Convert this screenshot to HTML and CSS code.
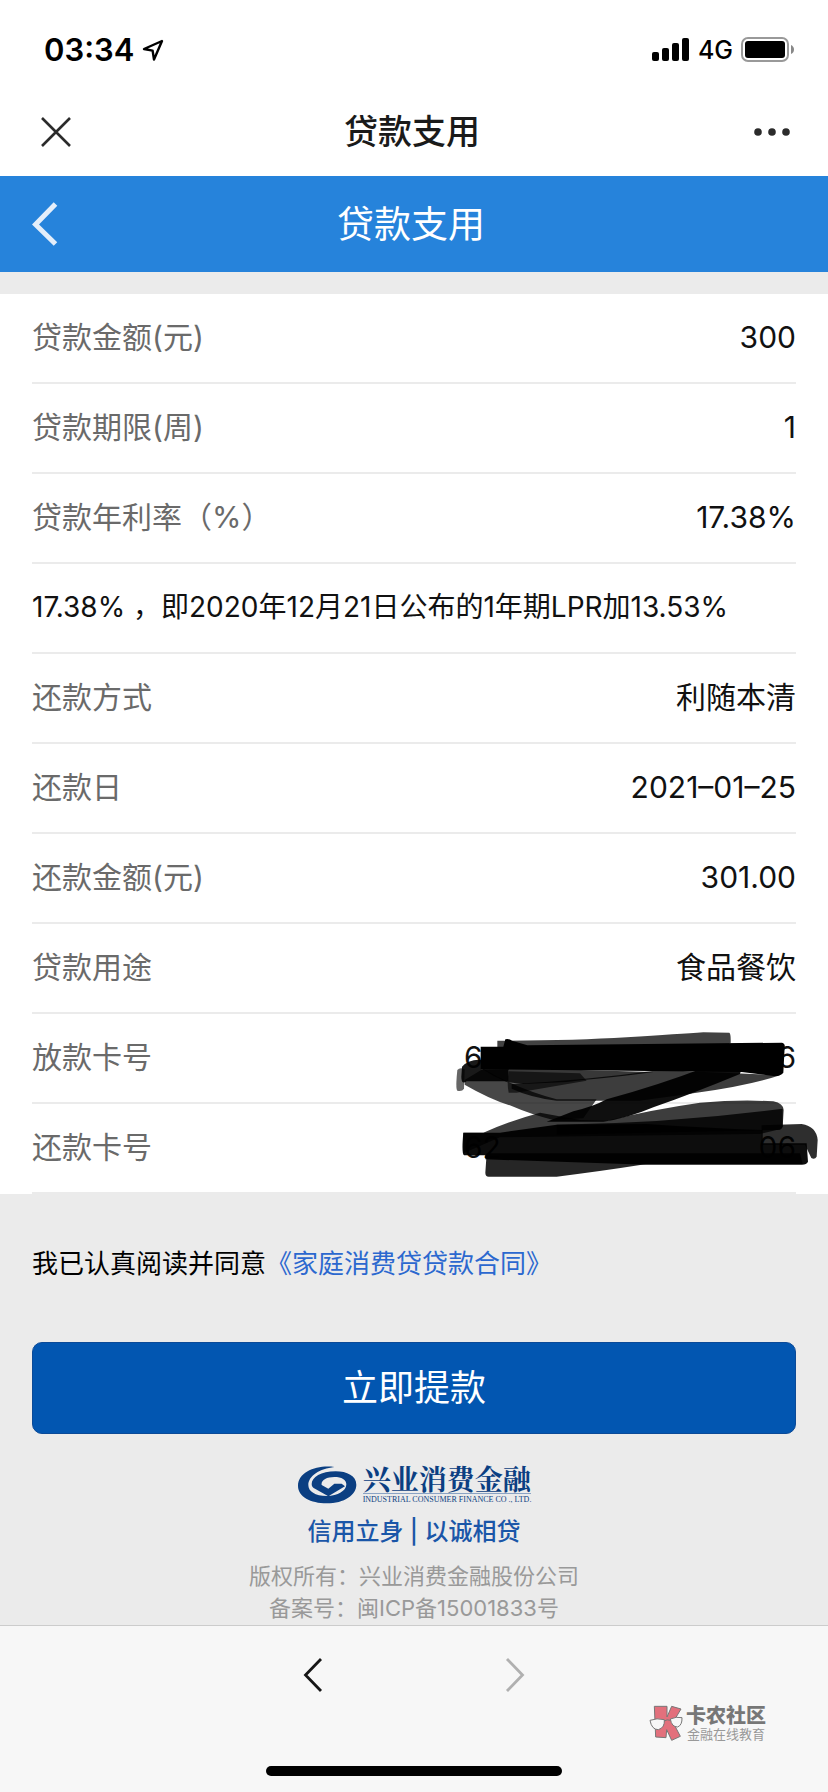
FILE: index.html
```html
<!DOCTYPE html>
<html lang="zh-CN">
<head>
<meta charset="utf-8">
<meta name="viewport" content="width=device-width, initial-scale=1">
<title>贷款支用</title>
<link rel="stylesheet" href="styles.css">
</head>
<body>
<div class="screen">
  <div class="status">
    <div class="status-left">
      <span class="time">03:34</span>
      <svg class="icon-location" width="22" height="22" viewBox="0 0 22 22" fill="none" stroke="#000" stroke-width="2.4" stroke-linejoin="round"><path d="M20 2 2 10l8.6 1.6L12 20.500Z"/></svg>
    </div>
    <div class="status-right">
      <svg width="38" height="24" viewBox="0 0 38 24"><rect x="0" y="14" width="7" height="9" rx="2"/><rect x="10" y="10" width="7" height="13" rx="2"/><rect x="20" y="5" width="7" height="18" rx="2"/><rect x="30" y="0" width="7" height="23" rx="2"/></svg>
      <span class="network">4G</span>
      <svg width="54" height="26" viewBox="0 0 54 26"><rect x="1" y="1" width="46" height="23" rx="6" fill="none" stroke="#999" stroke-width="2"/><rect x="4" y="4" width="40" height="17" rx="3"/><path d="M50 8q3 1.500 3 4.500t-3 4.500Z" fill="#888"/></svg>
    </div>
  </div>
  <nav class="topbar">
    <button class="icon-btn" aria-label="关闭"><svg width="37" height="30" viewBox="-7 0 37 30" fill="none" stroke="#2b2b2b" stroke-width="2.600"><path d="M1 1 29 29M29 1 1 29"/></svg></button>
    <span class="topbar-title">贷款支用</span>
    <button class="icon-btn" aria-label="更多"><svg width="37" height="10" viewBox="0 0 37 10" fill="#2b2b2b"><circle cx="5" cy="5" r="3.800"/><circle cx="19" cy="5" r="3.800"/><circle cx="33" cy="5" r="3.800"/></svg></button>
  </nav>
  <header class="header">
    <button class="icon-btn" aria-label="返回"><svg width="26" height="44" viewBox="0 0 26 44" fill="none" stroke="#e4eefa" stroke-width="5"><path d="M23.500 2 3.500 22.500 23.500 42"/></svg></button>
    <h1 class="header-title">贷款支用</h1>
    <span></span>
  </header>

  <main class="main">
    <div class="details">
      <dl class="rows">
        <div class="row"><dt>贷款金额(元)</dt><dd>300</dd></div>
        <div class="row"><dt>贷款期限(周)</dt><dd>1</dd></div>
        <div class="row"><dt>贷款年利率（%）</dt><dd>17.38%</dd></div>
      </dl>
      <p class="row note">17.38%&nbsp;，即2020年12月21日公布的1年期LPR加13.53%</p>
      <dl class="rows">
        <div class="row"><dt>还款方式</dt><dd>利随本清</dd></div>
        <div class="row"><dt>还款日</dt><dd>2021–01–25</dd></div>
        <div class="row"><dt>还款金额(元)</dt><dd>301.00</dd></div>
        <div class="row"><dt>贷款用途</dt><dd>食品餐饮</dd></div>
      </dl>
      <div class="cards">
        <dl class="rows">
          <div class="row"><dt>放款卡号</dt><dd class="card-no"><span>6</span><span>6</span></dd></div>
          <div class="row"><dt>还款卡号</dt><dd class="card-no"><span>62</span><span>06</span></dd></div>
        </dl>
        <svg class="scribble" width="388" height="190" viewBox="0 0 1164 570" aria-hidden="true">
          <g fill="#000">
            <path opacity=".74" d="M172 92Q400 92 560 82T790 67L868 68Q873 70 872 100L800 125 172 118Z"/>
            <path d="M122 110H190L196 88Q205 84 216 92L262 106 1026 98Q1036 100 1034 112L1030 188Q1020 200 1000 198L905 186 122 178Z"/>
            <path opacity=".9" d="M66 170Q90 146 125 150V178L205 178V214H80Q64 226 64 200Z"/>
            <path opacity=".6" d="M52 180Q60 170 74 178L72 236Q66 246 52 242Q46 236 52 180Z"/>
            <path opacity=".72" d="M74 210 130 176Q230 236 350 268L470 268 430 325 340 330Q270 312 215 288 150 268 74 224Z"/>
            <path opacity=".78" d="M122 174H206L640 186Q560 198 430 210L380 216 250 222 200 216Q160 200 122 174Z"/>
            <path opacity=".6" d="M206 184 420 190 440 212 230 248H206Q200 220 206 184Z"/>
            <path opacity=".76" d="M215 222Q430 212 660 180L1020 196Q930 226 780 247 680 262 600 272H350Q270 262 215 236Z"/>
            <path opacity=".94" d="M905 174 900 192Q760 250 640 292 560 326 490 335H320L400 304Q460 290 500 268 660 224 790 174Z"/>
            <path opacity=".76" d="M70 368H130Q210 332 300 308L420 330 500 332Q640 298 780 278 900 268 1000 274 1030 280 1031 300L1028 350Q1024 362 1010 360L960 372 180 382 70 430Z"/>
            <path opacity=".82" d="M350 344Q700 340 1028 296V350Q1020 362 1000 360L350 374Z"/>
            <path d="M70 368H180L350 344 620 342Q800 354 968 360V400H1100L1104 455Q1100 464 1086 464H620L136 448V436H72Q64 430 70 368Z" opacity=".95"/>
            <path opacity=".82" d="M965 346 1085 342Q1130 350 1133 390L1130 440Q1124 450 1114 444L1095 404H965Z"/>
            <path opacity=".85" d="M140 430H1080L1088 462H620Q480 484 350 500H146Q136 500 136 488Z"/>
          </g>
        </svg>
      </div>
    </div>

    <p class="agree">我已认真阅读并同意<a href="#contract">《家庭消费贷贷款合同》</a></p>
    <button class="submit">立即提款</button>

    <footer class="footer">
      <div class="brand">
        <svg width="60" height="38" viewBox="0 0 180 114"><path fill="#0b3f82" d="M112 3C62-4 3 16 3 60c0 32 38 52 86 52 54 0 89-26 89-56 0-26-28-40-62-40-44 0-72 18-72 38 0 8 4 12 10 14l40 23 50-30-10-8H112L94 68 74 57c-3-14 14-24 38-24 22 0 36 8 36 22 0 20-26 35-58 35-36 0-56-14-56-33C34 30 68 8 112 3Z"/></svg>
        <div class="brand-text">
          <span class="brand-cn">兴业消费金融</span>
          <span class="brand-en">INDUSTRIAL CONSUMER FINANCE CO ., LTD.</span>
        </div>
      </div>
      <p class="slogan">信用立身 | 以诚相贷</p>
      <p class="legal">版权所有：兴业消费金融股份公司<br>备案号：闽ICP备15001833号</p>
    </footer>
  </main>

  <div class="bottom">
    <div class="pager">
      <button class="icon-btn" aria-label="后退"><svg width="20" height="34" viewBox="0 0 20 34" fill="none" stroke="#161616" stroke-width="2.800"><path d="M18 1 2.500 17 18 33"/></svg></button>
      <button class="icon-btn" aria-label="前进" disabled><svg width="20" height="34" viewBox="0 0 20 34" fill="none" stroke="#b0b0b0" stroke-width="2.800"><path d="M2 1 17.500 17 2 33"/></svg></button>
    </div>
    <div class="watermark">
      <svg width="34" height="36" viewBox="0 0 102 108"><g stroke="#777" stroke-width="3"><path fill="#e2707c" d="M16 4H54L54 36 68 4 96 12 72 52 94 94 68 106 53 74 51 98 20 96Z"/><path fill="#f7f7f7" d="M3 46Q24 38 46 44 48 68 28 74 8 74 3 46ZM64 42Q82 34 99 38 100 60 86 66 68 66 64 42Z"/><path fill="none" d="M46 48Q54 42 64 46"/></g></svg>
      <div class="wm-text"><span class="wm-title">卡农社区</span><span class="wm-sub">金融在线教育</span></div>
    </div>
    <div class="home"></div>
  </div>
</div>
</body>
</html>
```
FILE: styles.css
```css
* { box-sizing: border-box; margin: 0; padding: 0; }
body {
  font-family: Inter, "Noto Sans CJK SC", sans-serif;
  background: #ebebeb;
  color: #111;
}
button { font: inherit; border: 0; background: none; cursor: pointer; }
svg { display: block; }
.screen { display: flex; flex-direction: column; min-height: 100vh; }

.status {
  display: flex; justify-content: space-between; align-items: center;
  height: 88px; padding: 12px 33px 0 44px; background: #fff; color: #000;
}
.status-left, .status-right { display: flex; align-items: center; gap: 8px; }
.time { font-size: 31px; line-height: 40px; font-weight: 600; }
.network { font-size: 25px; line-height: 32px; font-weight: 500; }

.topbar, .header {
  display: grid; grid-template-columns: 1fr auto 1fr; align-items: center;
}
.topbar { height: 88px; padding: 0 38px 0 34px; background: #fff; }
.topbar-title { font-size: 34px; line-height: 48px; font-weight: 500; color: #1a1a1a; }
.icon-btn { display: flex; justify-self: start; }
.icon-btn:last-child { justify-self: end; }
.header { height: 96px; padding: 0 38px 0 32px; background: #2683db; color: #fff; }
.header-title { padding-top: 2px; font-size: 37px; line-height: 48px; font-weight: 400; }

.main { flex: 1; padding-top: 22px; }
.details { padding: 0 32px; background: #fff; }
.row {
  display: flex; align-items: center; justify-content: space-between;
  height: 90px; padding-bottom: 2px; border-bottom: 2px solid #ebebeb;
  font-size: 30px; line-height: 44px;
}
.row dt { color: #6a6a6a; }
.note { font-size: 28px; }
.cards { position: relative; }
.card-no { display: flex; justify-content: space-between; width: 332px; }
.scribble { position: absolute; top: -4px; right: -32px; }

.agree { padding: 50px 32px; font-size: 26px; line-height: 40px; color: #000; }
.agree a { color: #2b68cf; text-decoration: none; }
.submit {
  display: block; width: calc(100% - 64px); height: 92px; margin: 8px 32px 0;
  border: 1px solid #0b4a98; border-radius: 10px;
  background: #0256b1; color: #fff; font-size: 36px; line-height: 48px;
}
.footer { padding-top: 29px; text-align: center; }
.brand { display: flex; justify-content: center; align-items: center; gap: 6px; }
.brand-text { display: flex; flex-direction: column; align-items: flex-start; color: #0b3f82; }
.brand-cn {
  font-family: "Noto Serif CJK SC", "Noto Sans CJK SC", serif;
  font-size: 28px; line-height: 30px; font-weight: 700; border-bottom: 1px solid #8aa3c4;
}
.brand-en { font-family: "Liberation Serif", serif; font-size: 8px; line-height: 12px; }
.slogan { margin-top: 8px; font-size: 24px; line-height: 36px; font-weight: 500; color: #1a56a8; }
.legal { margin-top: 10px; font-size: 22px; line-height: 32px; color: #999; }

.bottom {
  position: relative; height: 167px; padding-top: 32px;
  border-top: 1px solid #ccc; background: #f7f7f7;
}
.pager { display: flex; justify-content: center; gap: 182px; }
.watermark { position: absolute; right: 62px; bottom: 51px; display: flex; align-items: center; gap: 3px; }
.wm-text { display: flex; flex-direction: column; align-items: center; }
.wm-title { font-size: 20px; line-height: 22px; font-weight: 900; color: #777; }
.wm-sub { font-size: 13px; line-height: 14px; color: #999; }
.home {
  position: absolute; left: 0; right: 0; bottom: 16px; margin: 0 auto;
  width: 296px; height: 10px; border-radius: 5px; background: #000;
}
```
